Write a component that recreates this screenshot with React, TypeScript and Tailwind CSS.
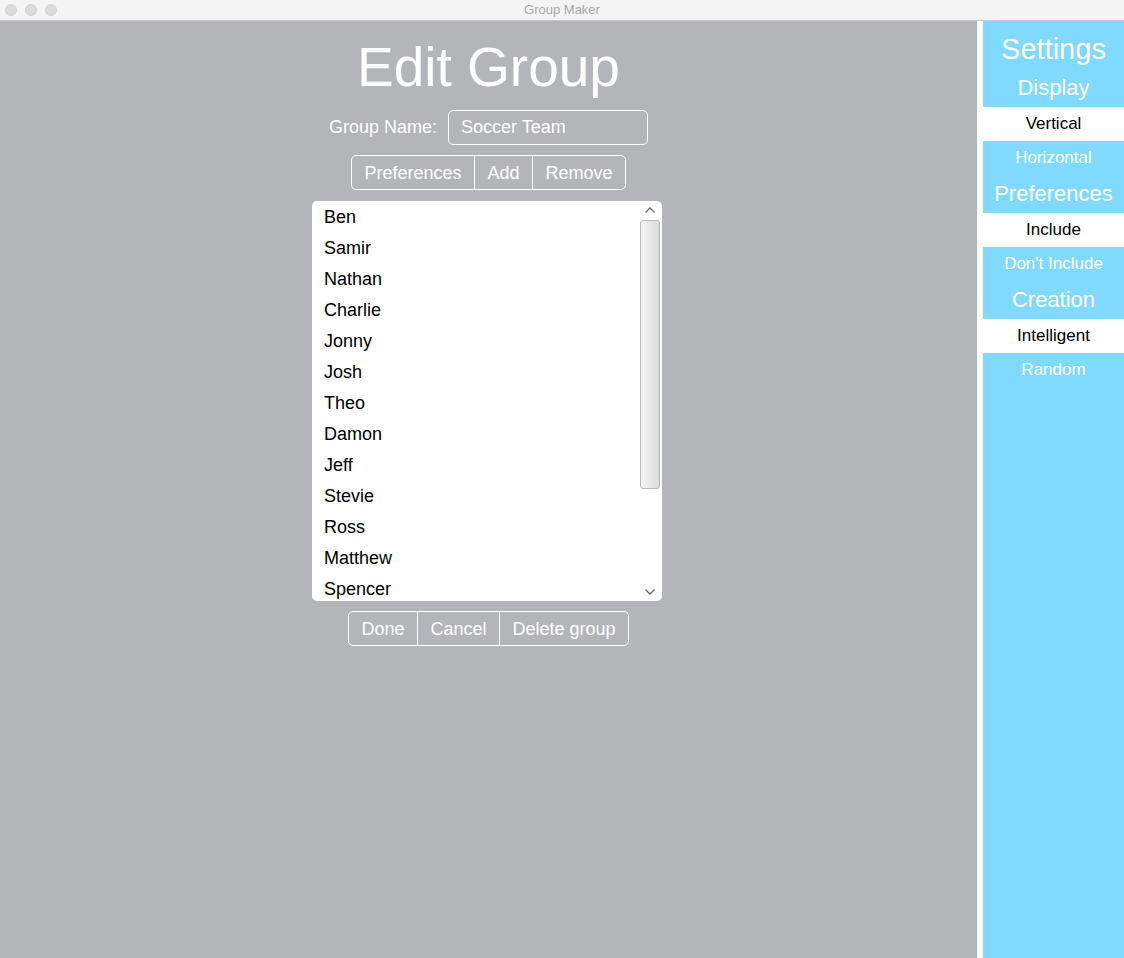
import { useState } from "react";

const PEOPLE = [
  "Ben",
  "Samir",
  "Nathan",
  "Charlie",
  "Jonny",
  "Josh",
  "Theo",
  "Damon",
  "Jeff",
  "Stevie",
  "Ross",
  "Matthew",
  "Spencer",
];

interface Option {
  label: string;
  selected?: boolean;
}

const SECTIONS: { title: string; options: Option[] }[] = [
  { title: "Display", options: [{ label: "Vertical", selected: true }, { label: "Horizontal" }] },
  { title: "Preferences", options: [{ label: "Include", selected: true }, { label: "Don't Include" }] },
  { title: "Creation", options: [{ label: "Intelligent", selected: true }, { label: "Random" }] },
];

function ButtonGroup({ labels }: { labels: string[] }) {
  return (
    <div className="flex h-[35px] border border-white rounded-[5px] overflow-hidden">
      {labels.map((l, i) => (
        <button
          key={l}
          className={`px-[12.5px] text-[18px] text-white leading-none ${i > 0 ? "border-l border-white" : ""}`}
        >
          {l}
        </button>
      ))}
    </div>
  );
}

export default function App() {
  const [name, setName] = useState("Soccer Team");

  return (
    <div
      className="w-[1124px] h-[958px] flex flex-col overflow-hidden bg-[#b4b5b8]"
      style={{ fontFamily: '"Liberation Sans", Arial, sans-serif' }}
    >
      {/* Title bar */}
      <div className="h-[21px] shrink-0 bg-[#f4f4f4] border-b border-[#c9c9c9] flex items-center relative">
        <div className="flex gap-[8px] pl-[5px]">
          <span className="w-[12px] h-[12px] rounded-full bg-[#dcdcdc] border border-[#cfcfcf]" />
          <span className="w-[12px] h-[12px] rounded-full bg-[#dcdcdc] border border-[#cfcfcf]" />
          <span className="w-[12px] h-[12px] rounded-full bg-[#dcdcdc] border border-[#cfcfcf]" />
        </div>
        <div className="absolute inset-0 flex items-center justify-center text-[13px] text-[#a8a8a8]">
          Group Maker
        </div>
      </div>

      <div className="flex flex-1 min-h-0">
        {/* Main */}
        <div className="w-[977px] flex flex-col items-center">
          <h1 className="text-[55px] leading-none text-white mt-[19px] h-[69px]">Edit Group</h1>

          <div className="flex items-center gap-[11px] mt-[1px]">
            <span className="text-[18px] text-white">Group Name:</span>
            <input
              value={name}
              onChange={(e) => setName(e.target.value)}
              className="w-[200px] h-[35px] bg-transparent border border-white rounded-[5px] px-[12px] text-[18px] text-white outline-none"
            />
          </div>

          <div className="mt-[10px]">
            <ButtonGroup labels={["Preferences", "Add", "Remove"]} />
          </div>

          <div className="mt-[11px] mr-[3px] w-[350px] h-[400px] bg-white rounded-[5px] flex overflow-hidden">
            <div className="flex-1 pt-[4px] pl-[12px]">
              {PEOPLE.map((p) => (
                <div key={p} className="h-[31px] text-[18px] text-black leading-[24px]">
                  {p}
                </div>
              ))}
            </div>
            <div className="w-[24px] flex flex-col items-center pr-[1px]">
              <svg width="12" height="8" viewBox="0 0 12 8" className="mt-[5px]">
                <path d="M1.5 6.5 L6 2 L10.5 6.5" fill="none" stroke="#6b6b6b" strokeWidth="1.3" />
              </svg>
              <div className="mt-[6px] w-[20px] h-[269px] rounded-[3px] border border-[#b9b9b9] bg-gradient-to-r from-[#f3f3f3] to-[#dcdcdc]" />
              <div className="flex-1" />
              <svg width="12" height="8" viewBox="0 0 12 8" className="mb-[5px]">
                <path d="M1.5 1.5 L6 6 L10.5 1.5" fill="none" stroke="#6b6b6b" strokeWidth="1.3" />
              </svg>
            </div>
          </div>

          <div className="mt-[10px]">
            <ButtonGroup labels={["Done", "Cancel", "Delete group"]} />
          </div>
        </div>

        {/* Divider */}
        <div className="w-[6px] bg-white" />

        {/* Settings sidebar */}
        <div className="flex-1 bg-[#80d9ff] flex flex-col items-stretch text-center">
          <div className="text-[29px] text-white leading-none pt-[14px] h-[48px]">Settings</div>
          {SECTIONS.map((s) => (
            <div key={s.title} className="flex flex-col">
              <div className="text-[22px] text-white leading-none h-[38px] flex items-center justify-center">
                {s.title}
              </div>
              {s.options.map((o) => (
                <div
                  key={o.label}
                  className={`h-[34px] flex items-center justify-center text-[17px] ${
                    o.selected ? "bg-white text-black" : "text-white"
                  }`}
                >
                  {o.label}
                </div>
              ))}
            </div>
          ))}
        </div>
      </div>
    </div>
  );
}
